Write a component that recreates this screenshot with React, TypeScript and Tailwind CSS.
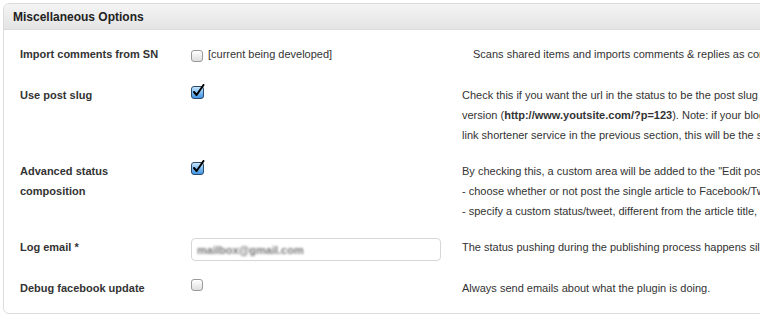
const FONT = "font-['Liberation_Sans',Arial,sans-serif]";

function Unchecked({ className = '' }: { className?: string }) {
  return (
    <span className={`block w-[12px] h-[12px] rounded-[3px] border border-[#9a9a9a] bg-gradient-to-b from-white to-[#dedede] shadow-[inset_0_1px_0_#fff] ${className}`} />
  );
}

function Checked({ className = '' }: { className?: string }) {
  return (
    <svg width="14" height="15" viewBox="0 0 14 15" className={`block ${className}`}>
      <defs>
        <linearGradient id="cbg" x1="0" y1="0" x2="0" y2="1">
          <stop offset="0" stopColor="#cfe8fc" />
          <stop offset="0.5" stopColor="#7dbdf3" />
          <stop offset="1" stopColor="#3d8fe0" />
        </linearGradient>
      </defs>
      <rect x="0.5" y="2.5" width="12" height="12" rx="2.5" fill="url(#cbg)" stroke="#2a4a6e" />
      <path d="M3 8 L5.6 11 L12.5 1" fill="none" stroke="#000" strokeWidth="2" strokeLinecap="round" strokeLinejoin="round" />
    </svg>
  );
}

function Row({ label, control, children, className = '' }: {
  label: React.ReactNode;
  control: React.ReactNode;
  children: React.ReactNode;
  className?: string;
}) {
  return (
    <div className={`grid grid-cols-[171px_271px_1fr] leading-[20px] ${className}`}>
      <div className="font-bold text-[#333]">{label}</div>
      <div>{control}</div>
      <div className="whitespace-nowrap">{children}</div>
    </div>
  );
}

export default function App() {
  return (
    <div className={`w-[760px] h-[317px] overflow-hidden bg-white ${FONT} text-[11px] text-[#333]`}>
      <div className="mt-[3px] ml-[3px] w-[1000px] border border-[#dcdcdc] rounded-[6px] overflow-hidden">
        <div className="h-[26px] border-b border-[#dcdcdc] bg-gradient-to-b from-[#f4f4f4] to-[#e4e4e4] pl-[9px] flex items-center">
          <span className="text-[12px] font-bold text-[#222] mt-[1px]">Miscellaneous Options</span>
        </div>
        <div className="px-4 pt-[14px] pb-[15px] flex flex-col">
          <Row
            label="Import comments from SN"
            control={
              <div className="flex items-start gap-[5px]">
                <Unchecked className="mt-[6px]" />
                <span>[current being developed]</span>
              </div>
            }
          >
            <div className="pl-[11px]">Scans shared items and imports comments &amp; replies as comments to your posts.</div>
          </Row>

          <Row
            className="mt-[21px]"
            label="Use post slug"
            control={<Checked className="-mt-[1px]" />}
          >
            <div>Check this if you want the url in the status to be the post slug one, instead of the default wordpress</div>
            <div>version (<b>http://www.youtsite.com/?p=123</b>). Note: if your blog uses permalinks and you selected a</div>
            <div>link shortener service in the previous section, this will be the shortened url instead.</div>
          </Row>

          <Row
            className="mt-[16px]"
            label={<>Advanced status<br />composition</>}
            control={<Checked className="-mt-[1px]" />}
          >
            <div>By checking this, a custom area will be added to the "Edit post" page, from where you can:</div>
            <div>- choose whether or not post the single article to Facebook/Twitter</div>
            <div>- specify a custom status/tweet, different from the article title, and preview it</div>
          </Row>

          <Row
            className="mt-[16px]"
            label="Log email *"
            control={
              <div className="mt-[1px] w-[250px] h-[23px] rounded-[4px] border border-[#d6d6d6] bg-white flex items-center pl-[5px] overflow-hidden">
                <span className="text-[#777] blur-[1px] font-bold">mailbox@gmail.com</span>
              </div>
            }
          >
            The status pushing during the publishing process happens silently, errors are logged to this email.
          </Row>

          <Row
            className="mt-[17px]"
            label="Debug facebook update"
            control={<Unchecked className="mt-[1px]" />}
          >
            Always send emails about what the plugin is doing.
          </Row>
        </div>
      </div>
    </div>
  );
}
